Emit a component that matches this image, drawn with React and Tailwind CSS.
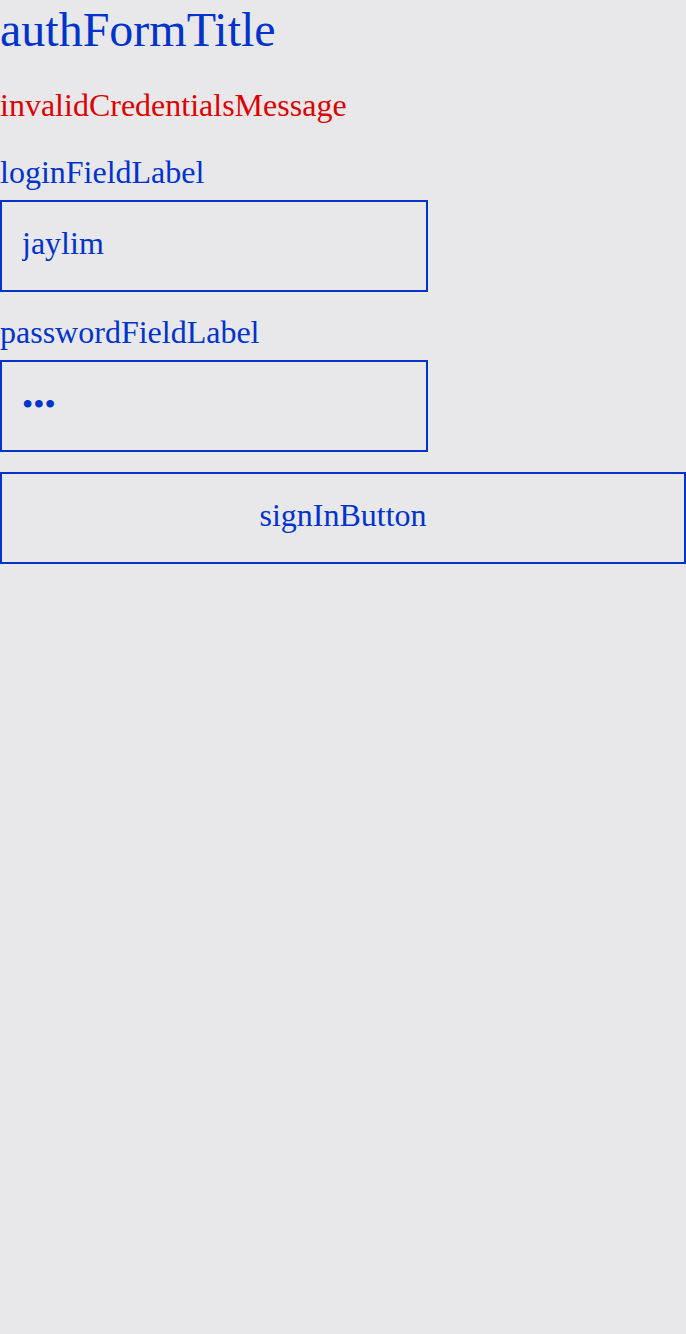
import React, { useState } from "react";

const App = () => {
  const [login, setLogin] = useState("jaylim");
  const [password, setPassword] = useState("abc");

  return (
    <div className="min-h-screen bg-[#e8e8ea] font-['Liberation_Serif',serif] text-[#0033cc]">
      <form onSubmit={(e) => e.preventDefault()} className="flex flex-col">
        <h1 className="text-[48px] leading-[60px]">authFormTitle</h1>
        <p className="mt-[25px] text-[32px] leading-[40px] text-[#dd0000]">invalidCredentialsMessage</p>

        {/* Login */}
        <label className="mt-[27px] text-[32px] leading-[40px]">loginFieldLabel</label>
        <input
          type="text"
          value={login}
          onChange={(e) => setLogin(e.target.value)}
          className="mt-2 w-[428px] h-[92px] border-2 border-[#0033cc] bg-transparent px-5 pb-[6px] text-[32px] text-[#0033cc] outline-none"
        />

        {/* Password */}
        <label className="mt-5 text-[32px] leading-[40px]">passwordFieldLabel</label>
        <input
          type="password"
          value={password}
          onChange={(e) => setPassword(e.target.value)}
          className="mt-2 w-[428px] h-[92px] border-2 border-[#0033cc] bg-transparent px-5 pb-[4px] text-[32px] text-[#0033cc] outline-none"
        />

        <button
          type="submit"
          className="mt-5 w-full h-[92px] border-2 border-[#0033cc] bg-transparent pb-[6px] text-[32px] text-[#0033cc]"
        >
          signInButton
        </button>
      </form>
    </div>
  );
};

export default App;
